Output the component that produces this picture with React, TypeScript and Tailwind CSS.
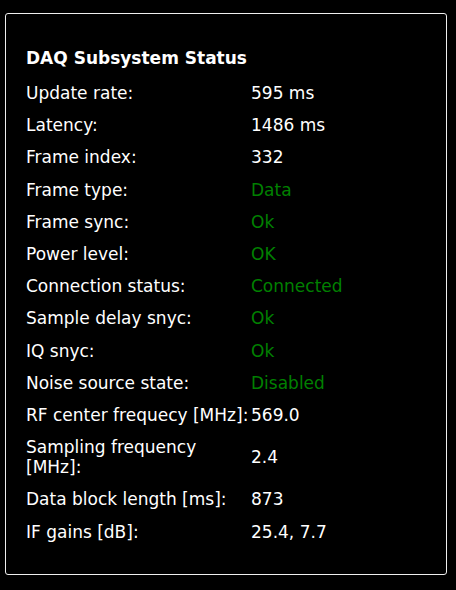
const rows: { label: React.ReactNode; value: string; ok?: boolean }[] = [
  { label: "Update rate:", value: "595 ms" },
  { label: "Latency:", value: "1486 ms" },
  { label: "Frame index:", value: "332" },
  { label: "Frame type:", value: "Data", ok: true },
  { label: "Frame sync:", value: "Ok", ok: true },
  { label: "Power level:", value: "OK", ok: true },
  { label: "Connection status:", value: "Connected", ok: true },
  { label: "Sample delay snyc:", value: "Ok", ok: true },
  { label: "IQ snyc:", value: "Ok", ok: true },
  { label: "Noise source state:", value: "Disabled", ok: true },
  { label: "RF center frequecy [MHz]:", value: "569.0" },
  {
    label: (
      <>
        Sampling frequency
        <br />
        [MHz]:
      </>
    ),
    value: "2.4",
  },
  { label: "Data block length [ms]:", value: "873" },
  { label: "IF gains [dB]:", value: "25.4, 7.7" },
];

export default function App() {
  return (
    <div
      className="min-h-[590px] w-[456px] bg-black pl-[5px] pt-[13px] text-white"
      style={{ fontFamily: "'DejaVu Sans', sans-serif" }}
    >
      {/* Status card */}
      <div className="h-[562px] w-[442px] rounded-[3px] border border-[#eeeeee] px-[20px] pt-[34px]">
        <h2 className="text-[17px] font-bold leading-[20px]">DAQ Subsystem Status</h2>
        <div className="mt-[9px] grid grid-cols-[225px_1fr] text-[17px] leading-[20px]">
          {rows.map((row, i) => (
            <div key={i} className="contents">
              <div className="whitespace-nowrap py-[6.1px]">{row.label}</div>
              <div className={`flex items-center py-[6.1px] ${row.ok ? "text-[#008000]" : "text-white"}`}>
                {row.value}
              </div>
            </div>
          ))}
        </div>
      </div>
    </div>
  );
}
